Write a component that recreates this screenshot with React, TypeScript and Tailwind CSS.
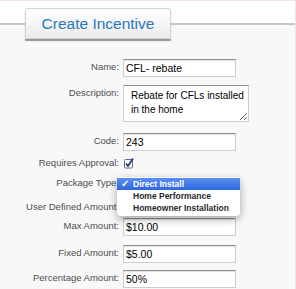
import React from 'react';

const labelCls = "w-[119px] shrink-0 text-right text-[9.5px] leading-[14px] text-[#4d4d4d] whitespace-nowrap";
const inputCls = "ml-[4px] h-[18px] w-[113px] bg-white border border-[#cdcdcd] border-t-[#8f8f8f] shadow-[inset_0_1px_1px_rgba(0,0,0,0.12)] pl-[2px] text-[10.5px] leading-[16px] text-black";

function Row({ label, value, className }: { label: string; value: string; className: string }) {
  return (
    <div className={`flex items-start ${className}`}>
      <span className={`${labelCls} pt-[1px]`}>{label}</span>
      <div className={inputCls}>{value}</div>
    </div>
  );
}

export default function App() {
  return (
    <div className="relative w-[296px] h-[289px] overflow-hidden bg-[#f8f8f8] border-t border-r border-[#f6e4e4] font-['Liberation_Sans',Arial,sans-serif]">
      {/* header strip */}
      <div className="relative h-[24px] bg-white border-b-2 border-[#c6c6c6]">
        <div className="absolute left-[25px] top-[7px] w-[146px] h-[31px] rounded-t-[3px] border border-[#d2d2d2] bg-gradient-to-b from-white to-[#ebebeb] shadow-[0_2px_1px_rgba(0,0,0,0.4)] flex items-center justify-center text-[15.5px] text-[#2a78bd]">
          Create Incentive
        </div>
      </div>

      {/* form */}
      <div className="flex flex-col">
        <Row label="Name:" value="CFL- rebate" className="mt-[34px]" />

        <div className="flex items-start mt-[8px]">
          <span className={`${labelCls} pt-[1px]`}>Description:</span>
          <textarea
            readOnly
            defaultValue={"Rebate for CFLs installed in the home"}
            className="ml-[4px] h-[37px] w-[126px] bg-white border border-[#cdcdcd] border-t-[#8f8f8f] pl-[7px] pr-[4px] pt-[3px] text-[10px] leading-[14px] text-black outline-none"
          />
        </div>

        <Row label="Code:" value="243" className="mt-[11px]" />

        <div className="flex items-center mt-[6px] h-[12px]">
          <span className={labelCls}>Requires Approval:</span>
          <svg className="ml-[5px]" width="10" height="11" viewBox="0 0 10 11">
            <rect x="0.5" y="1.5" width="8" height="8.5" rx="1" fill="#fff" stroke="#5a6a8a" />
            <path d="M2 5.5 L4 8 L9 0.5" fill="none" stroke="#1d3f8a" strokeWidth="1.8" />
          </svg>
        </div>

        <div className="flex items-center mt-[8px] h-[12px]">
          <span className={labelCls}>Package Type:</span>
        </div>

        <div className="flex items-center mt-[12px] h-[12px]">
          <span className={labelCls}>User Defined Amount:</span>
        </div>

        <Row label="Max Amount:" value="$10.00" className="mt-[5px]" />
        <Row label="Fixed Amount:" value="$5.00" className="mt-[9px]" />
        <Row label="Percentage Amount:" value="50%" className="mt-[7px]" />
      </div>

      {/* open select menu */}
      <div className="absolute left-[117px] top-[176px] w-[123px] rounded-[4px] bg-white shadow-[0_3px_8px_rgba(0,0,0,0.35)] pt-[1px] pb-[2px] text-[8.5px] font-bold leading-[12px] text-[#2a2a2a] whitespace-nowrap">
        <div className="flex items-center h-[12px] bg-gradient-to-b from-[#5a8ff0] to-[#2f66dc] text-white">
          <span className="w-[16px] pl-[4px] text-[10px]">✓</span>
          <span>Direct Install</span>
        </div>
        <div className="h-[12px] pl-[16px]">Home Performance</div>
        <div className="h-[12px] pl-[16px]">Homeowner Installation</div>
      </div>
    </div>
  );
}
